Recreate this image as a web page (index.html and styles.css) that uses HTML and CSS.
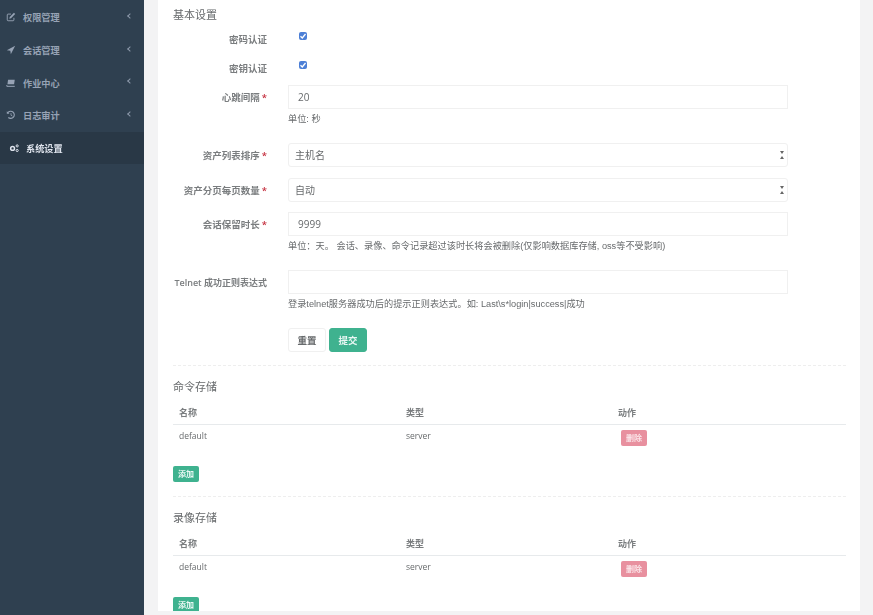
FILE: index.html
```html
<!DOCTYPE html>
<html lang="zh-CN">
<head>
    <meta charset="UTF-8">
    <title>系统设置</title>
    <link rel="stylesheet" href="styles.css">
</head>
<body>
    <div class="wrapper">
        <nav class="sidebar">
            <a class="nav-item">
                <svg class="nav-icon" viewBox="0 0 12 12"><path d="M9.500 7v2.500a1 1 0 0 1-1 1h-6a1 1 0 0 1-1-1v-6a1 1 0 0 1 1-1H6" fill="none" stroke="currentColor" stroke-width="1.100"/><path d="M4.500 6l5-5 1.500 1.500-5 5-2 .5z" fill="currentColor"/></svg>
                <span class="nav-label">权限管理</span>
                <span class="nav-arrow"></span>
            </a>
            <a class="nav-item">
                <svg class="nav-icon" viewBox="0 0 12 12"><path d="M11 1L1 6.300l4.200.6.600 4.100z" fill="currentColor"/></svg>
                <span class="nav-label">会话管理</span>
                <span class="nav-arrow"></span>
            </a>
            <a class="nav-item">
                <svg class="nav-icon" viewBox="0 0 12 12"><path d="M2.500 2h8l-.8 5.500h-8z" fill="currentColor"/><path d="M1 8.500v1.500h9.500" fill="none" stroke="currentColor" stroke-width="1.200"/></svg>
                <span class="nav-label">作业中心</span>
                <span class="nav-arrow"></span>
            </a>
            <a class="nav-item">
                <svg class="nav-icon" viewBox="0 0 12 12"><path d="M2.200 3.200A4.300 4.300 0 1 1 2.800 9" fill="none" stroke="currentColor" stroke-width="1.300"/><path d="M1 1.500l3.200 3H1z" fill="currentColor"/><path d="M6 3.800v2.500l1.700 1" fill="none" stroke="currentColor"/></svg>
                <span class="nav-label">日志审计</span>
                <span class="nav-arrow"></span>
            </a>
            <a class="nav-item active">
                <svg class="nav-icon" viewBox="0 0 12 12"><circle cx="4.300" cy="6.500" r="2.300" fill="none" stroke="currentColor" stroke-width="1.800"/><circle cx="9.800" cy="3.500" r="1.300" fill="none" stroke="currentColor" stroke-width="1.200"/><circle cx="9.800" cy="9" r="1.300" fill="none" stroke="currentColor" stroke-width="1.200"/></svg>
                <span class="nav-label">系统设置</span>
            </a>
        </nav>

        <main class="content">
            <div class="panel">
                <h3 class="section-title first">基本设置</h3>

                <div class="form-row check-row">
                    <label class="form-label">密码认证</label>
                    <div class="form-field"><span class="checkbox"><svg viewBox="0 0 8 8"><path d="M1.500 4.200l1.800 1.800 3.200-4" fill="none" stroke="#fff" stroke-width="1.300"/></svg></span></div>
                </div>
                <div class="form-row check-row">
                    <label class="form-label">密钥认证</label>
                    <div class="form-field"><span class="checkbox"><svg viewBox="0 0 8 8"><path d="M1.500 4.200l1.800 1.800 3.200-4" fill="none" stroke="#fff" stroke-width="1.300"/></svg></span></div>
                </div>

                <div class="form-row has-help">
                    <label class="form-label">心跳间隔<em>*</em></label>
                    <div class="form-field">
                        <div class="input">20</div>
                        <p class="help">单位: 秒</p>
                    </div>
                </div>
                <div class="form-row">
                    <label class="form-label">资产列表排序<em>*</em></label>
                    <div class="form-field"><div class="input select">主机名<span class="caret"></span></div></div>
                </div>
                <div class="form-row">
                    <label class="form-label">资产分页每页数量<em>*</em></label>
                    <div class="form-field"><div class="input select">自动<span class="caret"></span></div></div>
                </div>
                <div class="form-row has-help">
                    <label class="form-label">会话保留时长<em>*</em></label>
                    <div class="form-field">
                        <div class="input">9999</div>
                        <p class="help">单位：天。 会话、录像、命令记录超过该时长将会被删除(仅影响数据库存储, oss等不受影响)</p>
                    </div>
                </div>
                <div class="form-row has-help">
                    <label class="form-label nowrap">Telnet 成功正则表达式</label>
                    <div class="form-field">
                        <div class="input"></div>
                        <p class="help">登录telnet服务器成功后的提示正则表达式。如: Last\s*login|success|成功</p>
                    </div>
                </div>
                <div class="form-row actions">
                    <button class="btn btn-default">重置</button>
                    <button class="btn btn-primary">提交</button>
                </div>

                <div class="divider"></div>

                <h3 class="section-title">命令存储</h3>
                <table class="store-table">
                    <thead><tr><th class="col-name">名称</th><th class="col-type">类型</th><th>动作</th></tr></thead>
                    <tbody><tr><td>default</td><td>server</td><td><button class="btn-xs btn-danger">删除</button></td></tr></tbody>
                </table>
                <button class="btn-xs btn-primary">添加</button>

                <div class="divider"></div>

                <h3 class="section-title">录像存储</h3>
                <table class="store-table">
                    <thead><tr><th class="col-name">名称</th><th class="col-type">类型</th><th>动作</th></tr></thead>
                    <tbody><tr><td>default</td><td>server</td><td><button class="btn-xs btn-danger">删除</button></td></tr></tbody>
                </table>
                <button class="btn-xs btn-primary">添加</button>
            </div>
        </main>
    </div>
</body>
</html>
```

FILE: styles.css
```css
* {
    margin: 0;
    padding: 0;
    box-sizing: border-box;
    font-family: "Open Sans", "Noto Sans CJK SC", sans-serif;
}

html, body {
    height: 100%;
    overflow: hidden;
}

body {
    background-color: #f3f3f4;
    color: #676a6c;
    font-size: 9.500px;
}

.wrapper {
    display: flex;
    height: 615px;
    filter: blur(0.4px);
}

/* sidebar */
.sidebar {
    width: 144px;
    flex-shrink: 0;
    padding-top: 1px;
    background-color: #2f4050;
}

.nav-item {
    display: flex;
    align-items: center;
    height: 32.700px;
    padding: 0 12px 0 6px;
    color: #97a3b5;
    font-size: 9.200px;
    font-weight: 600;
}

.nav-item.active {
    background-color: #293846;
    color: #dfe4ed;
    padding-left: 9px;
}

.nav-icon {
    width: 10px;
    height: 10px;
    margin-right: 7px;
    flex-shrink: 0;
}

.nav-label {
    flex: 1;
}

.nav-arrow {
    width: 4px;
    height: 4px;
    margin-top: -3px;
    border-left: 1px solid #8d99ab;
    border-bottom: 1px solid #8d99ab;
    transform: rotate(45deg);
}

/* main panel */
.content {
    flex: 1;
    padding: 0 13px 0 14px;
    overflow: hidden;
}

.panel {
    background-color: #fff;
    height: 611px;
    padding: 0 14px 0 15px;
    overflow: hidden;
}

.section-title {
    font-size: 11px;
    font-weight: 400;
    line-height: 14px;
    padding-top: 14px;
    margin-bottom: 6px;
    color: #676a6c;
}

.section-title.first {
    padding-top: 8px;
}

.form-row {
    display: flex;
    margin-bottom: 10.300px;
}

.form-label {
    width: 94px;
    margin-right: 21px;
    padding-top: 6px;
    text-align: right;
    font-weight: 600;
    line-height: 14px;
    flex-shrink: 0;
    color: #7a7d7f;
}

.form-label em {
    margin-left: 2px;
    color: #c5303f;
    font-style: normal;
}

.form-label.nowrap {
    white-space: nowrap;
    font-size: 9px;
}

.form-field {
    width: 500px;
}

.check-row {
    height: 28.500px;
    margin-bottom: 0;
}

.check-row .form-label {
    padding-top: 5px;
}

.checkbox {
    display: flex;
    align-items: center;
    justify-content: center;
    width: 8px;
    height: 8px;
    margin: 4px 0 0 11px;
    background-color: #4c7fd6;
    border-radius: 2px;
}

.checkbox svg {
    width: 8px;
    height: 8px;
}

.input {
    position: relative;
    height: 24px;
    padding: 0 9px;
    border: 1px solid #f0f0f0;
    color: #676a6c;
    font-size: 10px;
    line-height: 22px;
}

.select {
    padding-left: 6px;
    border-radius: 3px;
}

.caret {
    position: absolute;
    right: 3px;
    top: 7px;
    width: 0;
    height: 8px;
    border-left: 2px solid transparent;
    border-right: 2px solid transparent;
    border-top: 3px solid #666;
    border-bottom: 3px solid #666;
}

.help {
    margin-top: 3px;
    font-family: "Liberation Sans", "Noto Sans CJK SC", sans-serif;
    font-size: 9.200px;
    line-height: 14px;
    white-space: nowrap;
}

.has-help {
    margin-bottom: 17.300px;
}

.actions {
    padding-left: 115px;
    gap: 3px;
    margin-bottom: 13px;
}

.btn {
    height: 24px;
    width: 38px;
    border-radius: 3px;
    font-size: 9.500px;
    font-weight: 600;
}

.btn-default {
    background-color: #fff;
    border: 1px solid #f0f0f0;
    color: #676a6c;
}

.btn-primary {
    background-color: #3fb28f;
    border: 1px solid #3fb28f;
    color: #e9f7f3;
}

.divider {
    border-top: 1px dashed #eeeeee;
}

.store-table {
    width: 100%;
    border-collapse: collapse;
    table-layout: fixed;
    margin-bottom: 15px;
}

.store-table th {
    height: 24px;
    padding: 0 6px;
    text-align: left;
    font-size: 9px;
    font-weight: 600;
    color: #7a7d7f;
    border-bottom: 1px solid #e7eaec;
}

.store-table td {
    height: 27px;
    padding: 0 6px 5px;
    vertical-align: middle;
    font-size: 8.500px;
}

.col-name {
    width: 227px;
}

.col-type {
    width: 212px;
}

.btn-xs {
    display: block;
    width: 26px;
    height: 16px;
    border: none;
    border-radius: 2px;
    font-size: 8px;
    font-weight: 600;
    line-height: 16px;
}

.btn-danger {
    background-color: #e8909f;
    color: #fbe6ea;
    margin: 5px 0 0 3px;
}

.store-table + .btn-primary {
    margin-bottom: 14px;
}
```
